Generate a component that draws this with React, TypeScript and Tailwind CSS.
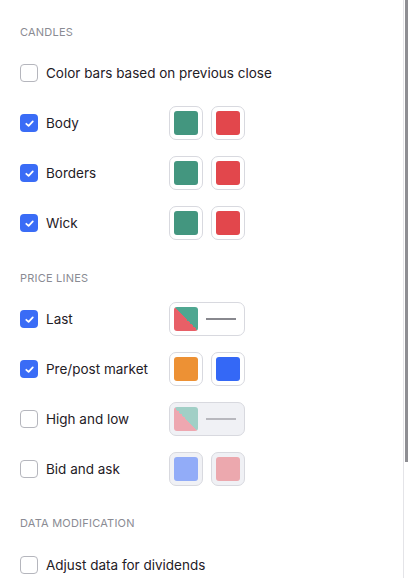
import React from "react";

type Swatch =
  | { kind: "pair"; a: string; b: string }
  | { kind: "line"; a: string; b: string; line: string };

type Row = { label: string; checked: boolean; disabled?: boolean; swatch?: Swatch };

const candles: Row[] = [
  { label: "Color bars based on previous close", checked: false },
  { label: "Body", checked: true, swatch: { kind: "pair", a: "#43967f", b: "#e2474c" } },
  { label: "Borders", checked: true, swatch: { kind: "pair", a: "#43967f", b: "#e2474c" } },
  { label: "Wick", checked: true, swatch: { kind: "pair", a: "#43967f", b: "#e2474c" } },
];

const priceLines: Row[] = [
  { label: "Last", checked: true, swatch: { kind: "line", a: "#e85f67", b: "#4fa791", line: "#88888e" } },
  { label: "Pre/post market", checked: true, swatch: { kind: "pair", a: "#ed9134", b: "#3468f6" } },
  {
    label: "High and low",
    checked: false,
    disabled: true,
    swatch: { kind: "line", a: "#eea7b0", b: "#a1cfc6", line: "#b8b8be" },
  },
  {
    label: "Bid and ask",
    checked: false,
    disabled: true,
    swatch: { kind: "pair", a: "#92acf8", b: "#eca8ae" },
  },
];

function Checkbox({ checked }: { checked: boolean }) {
  if (checked) {
    return (
      <div className="w-[18px] h-[18px] rounded-[4px] bg-[#3a6cf6] flex items-center justify-center shrink-0">
        <svg width="11" height="11" viewBox="0 0 12 12" fill="none">
          <path d="M2.5 6.3 L5 8.6 L9.6 3.6" stroke="white" strokeWidth="1.9" strokeLinecap="round" strokeLinejoin="round" />
        </svg>
      </div>
    );
  }
  return <div className="w-[18px] h-[18px] rounded-[4px] border border-[#b5b6bd] bg-white shrink-0" />;
}

function SwatchBox({ swatch, disabled }: { swatch: Swatch; disabled?: boolean }) {
  const box = `h-[34px] rounded-[7px] border border-[#d8d9df] p-[4px] flex items-center ${
    disabled ? "bg-[#f0f1f5]" : "bg-white"
  }`;
  if (swatch.kind === "pair") {
    return (
      <div className="flex gap-[8px]">
        <div className={`${box} w-[34px]`}>
          <div className="w-[24px] h-[24px] rounded-[3px]" style={{ background: swatch.a }} />
        </div>
        <div className={`${box} w-[34px]`}>
          <div className="w-[24px] h-[24px] rounded-[3px]" style={{ background: swatch.b }} />
        </div>
      </div>
    );
  }
  return (
    <div className={`${box} w-[76px] gap-[8px]`}>
      <div
        className="w-[24px] h-[24px] rounded-[3px]"
        style={{ background: `linear-gradient(to top right, ${swatch.a} 50%, ${swatch.b} 50%)` }}
      />
      <div className="w-[30px] h-[2px]" style={{ background: swatch.line }} />
    </div>
  );
}

function SettingRow({ row }: { row: Row }) {
  return (
    <div className="h-[50px] flex items-center">
      <div className="w-[149px] flex items-center gap-[8px] shrink-0">
        <Checkbox checked={row.checked} />
        <span className="text-[13.5px] text-[#1f2026] whitespace-nowrap">{row.label}</span>
      </div>
      {row.swatch && <SwatchBox swatch={row.swatch} disabled={row.disabled} />}
    </div>
  );
}

function Heading({ children }: { children: React.ReactNode }) {
  return (
    <div className="h-[20px] flex items-center text-[11px] uppercase tracking-[0.02em] text-[#8a8b93]">
      {children}
    </div>
  );
}

export default function App() {
  return (
    <div className="relative w-[409px] h-[578px] overflow-hidden bg-white font-['Inter',sans-serif]">
      <div className="px-[20px] pt-[22px]">
        <Heading>Candles</Heading>
        <div className="mt-[6px]">
          {candles.map((r, i) => (
            <SettingRow key={i} row={r} />
          ))}
        </div>
        <div className="mt-[20px]">
          <Heading>Price lines</Heading>
        </div>
        <div className="mt-[6px]">
          {priceLines.map((r, i) => (
            <SettingRow key={i} row={r} />
          ))}
        </div>
        <div className="mt-[19px]">
          <Heading>Data modification</Heading>
        </div>
        <div className="mt-[7px]">
          <SettingRow row={{ label: "Adjust data for dividends", checked: false }} />
        </div>
      </div>
      <div className="absolute right-0 top-0 w-[6px] h-[578px] border-l border-[#e4e4e8]">
        <div className="ml-px w-[3px] h-[462px] bg-[#8e8e93]" />
      </div>
    </div>
  );
}
